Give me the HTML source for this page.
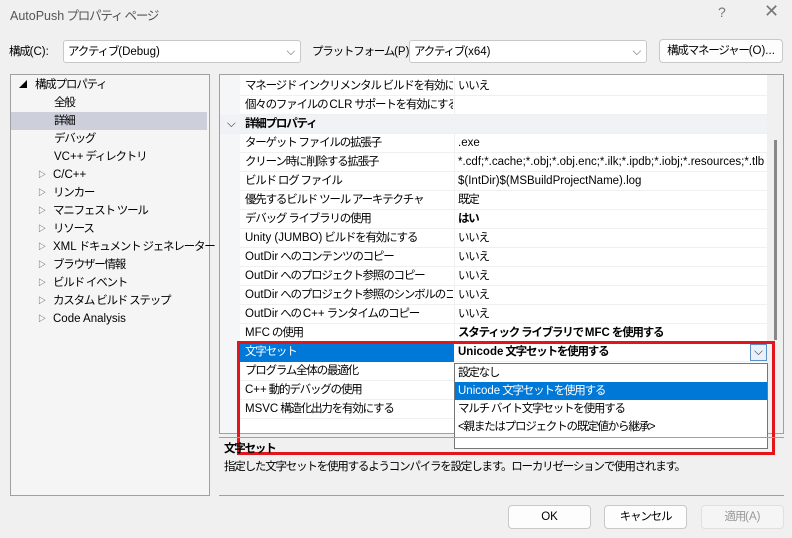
<!DOCTYPE html>
<html><head><meta charset="utf-8"><style>
*{box-sizing:border-box;margin:0;padding:0}
body{width:792px;height:538px;background:#f0f0f0;font-family:"Liberation Sans","Noto Sans CJK JP",sans-serif;font-size:11.5px;letter-spacing:-1.2px;color:#000;position:relative;overflow:hidden}
.l{letter-spacing:0}
.a{position:absolute;white-space:nowrap}
.box{position:absolute;background:#fff;border:1px solid #a0a0a0}
.btn{position:absolute;border:1px solid #c8c8c8;border-radius:4px;background:#fdfdfd;text-align:center;line-height:22px;white-space:nowrap;overflow:hidden}
.row{position:absolute;left:240px;width:527px;height:19px;border-bottom:1px solid #f0f0f0;line-height:18px;white-space:nowrap}
.row .n{position:absolute;left:5px;width:208px;overflow:hidden}
.row .v{position:absolute;left:218px}
.row .sep{position:absolute;left:214px;top:0;width:1px;height:19px;background:#f0f0f0}
.t{position:absolute;line-height:18px;white-space:nowrap}
.tree div{height:18px;line-height:18px;overflow:visible}
.tr{font-size:8px;color:#333;display:inline-block;width:15px;line-height:10px;vertical-align:1px}
</style></head><body>
<div class="a" style="left:10px;top:5px;color:#555;font-size:12.5px"><span class="l">AutoPush</span> プロパティ ページ</div>
<div class="a" style="left:718px;top:4px;color:#777;font-size:14px">?</div>
<div class="a" style="left:764px;top:1px;color:#777;font-size:18px">✕</div>

<div class="a" style="left:9px;top:43px">構成<span class="l">(C):</span></div>
<div class="btn" style="left:63px;top:40px;width:238px;height:23px;border-radius:3px;text-align:left;padding-left:4px;background:#fff">アクティブ<span class="l">(Debug)</span><span style="position:absolute;right:6px;top:0;color:#666">⌵</span></div>
<div class="a" style="left:312px;top:43px">プラットフォーム<span class="l">(P):</span></div>
<div class="btn" style="left:409px;top:40px;width:238px;height:23px;border-radius:3px;text-align:left;padding-left:4px;background:#fff">アクティブ<span class="l">(x64)</span><span style="position:absolute;right:6px;top:0;color:#666">⌵</span></div>
<div class="btn" style="left:659px;top:39px;width:124px;height:24px">構成マネージャー<span class="l">(O)...</span></div>

<div class="box" style="left:10px;top:74px;width:200px;height:422px;background:#f5f5f5"></div>
<div class="a" style="left:11px;top:112px;width:196px;height:18px;background:#cdd0db"></div>
<div class="t" style="left:19px;top:76px;font-size:8px">◢</div>
<div class="t" style="left:35px;top:76px">構成プロパティ</div>
<div class="t" style="left:54px;top:94px">全般</div>
<div class="t" style="left:54px;top:112px">詳細</div>
<div class="t" style="left:54px;top:130px">デバッグ</div>
<div class="t" style="left:54px;top:148px"><span class="l">VC++</span> ディレクトリ</div>
<div class="tree" style="position:absolute;left:38px;top:166px;white-space:nowrap">
<div><span class="tr">▷</span><span class="l">C/C++</span></div><div><span class="tr">▷</span>リンカー</div><div><span class="tr">▷</span>マニフェスト ツール</div><div><span class="tr">▷</span>リソース</div><div><span class="tr">▷</span><span class="l">XML</span> ドキュメント ジェネレーター</div><div><span class="tr">▷</span>ブラウザー情報</div><div><span class="tr">▷</span>ビルド イベント</div><div><span class="tr">▷</span>カスタム ビルド ステップ</div><div><span class="tr">▷</span><span class="l">Code Analysis</span></div></div>

<div class="box" style="left:219px;top:74px;width:565px;height:360px"></div>
<div class="a" style="left:220px;top:75px;width:20px;height:358px;background:#f5f6f8"></div>
<div class="a" style="left:767px;top:75px;width:16px;height:358px;background:#f0f0f0"></div>
<div class="a" style="left:774px;top:140px;width:3px;height:200px;background:#888"></div>
<div class="row" style="top:77px"><span class="n">マネージド インクリメンタル ビルドを有効にする</span><span class="sep"></span><span class="v">いいえ</span></div>
<div class="row" style="top:96px"><span class="n">個々のファイルの <span class="l">CLR</span> サポートを有効にする</span><span class="sep"></span></div>
<div class="row" style="top:115px;left:220px;width:547px;background:#f0f2f6"><span class="n" style="left:7px;color:#333">⌵</span><span class="n" style="left:25px;font-weight:bold">詳細プロパティ</span></div>
<div class="row" style="top:134px"><span class="n">ターゲット ファイルの拡張子</span><span class="sep"></span><span class="v l">.exe</span></div>
<div class="row" style="top:153px;overflow:hidden"><span class="n">クリーン時に削除する拡張子</span><span class="sep"></span><span class="v l">*.cdf;*.cache;*.obj;*.obj.enc;*.ilk;*.ipdb;*.iobj;*.resources;*.tlb</span></div>
<div class="row" style="top:172px"><span class="n">ビルド ログ ファイル</span><span class="sep"></span><span class="v l">$(IntDir)$(MSBuildProjectName).log</span></div>
<div class="row" style="top:191px"><span class="n">優先するビルド ツール アーキテクチャ</span><span class="sep"></span><span class="v">既定</span></div>
<div class="row" style="top:210px"><span class="n">デバッグ ライブラリの使用</span><span class="sep"></span><span class="v" style="font-weight:bold">はい</span></div>
<div class="row" style="top:229px"><span class="n"><span class="l">Unity (JUMBO)</span> ビルドを有効にする</span><span class="sep"></span><span class="v">いいえ</span></div>
<div class="row" style="top:248px"><span class="n"><span class="l">OutDir</span> へのコンテンツのコピー</span><span class="sep"></span><span class="v">いいえ</span></div>
<div class="row" style="top:267px"><span class="n"><span class="l">OutDir</span> へのプロジェクト参照のコピー</span><span class="sep"></span><span class="v">いいえ</span></div>
<div class="row" style="top:286px"><span class="n"><span class="l">OutDir</span> へのプロジェクト参照のシンボルのコピー</span><span class="sep"></span><span class="v">いいえ</span></div>
<div class="row" style="top:305px"><span class="n"><span class="l">OutDir</span> への <span class="l">C++</span> ランタイムのコピー</span><span class="sep"></span><span class="v">いいえ</span></div>
<div class="row" style="top:324px"><span class="n"><span class="l">MFC</span> の使用</span><span class="sep"></span><span class="v" style="font-weight:bold">スタティック ライブラリで <span class="l">MFC</span> を使用する</span></div>
<div class="row" style="top:343px"><span class="n" style="left:0;width:214px;height:19px;padding-left:5px;background:#0078d7;color:#fff">文字セット</span><span class="v" style="left:218px;font-weight:bold"><span class="l">Unicode</span> 文字セットを使用する</span>
<span style="position:absolute;left:510px;top:1px;width:17px;height:17px;border:1px solid #5a8fc8;background:#e8f1fb;text-align:center;line-height:14px;color:#333;letter-spacing:0">⌵</span></div>
<div class="row" style="top:362px"><span class="n">プログラム全体の最適化</span></div>
<div class="row" style="top:381px"><span class="n"><span class="l">C++</span> 動的デバッグの使用</span></div>
<div class="row" style="top:400px"><span class="n"><span class="l">MSVC</span> 構造化出力を有効にする</span></div>

<div class="a" style="left:454px;top:363px;width:314px;height:86px;background:#fff;border:1px solid #767676;line-height:18px">
<div style="padding-left:3px">設定なし</div>
<div style="padding-left:3px;background:#0078d7;color:#fff"><span class="l">Unicode</span> 文字セットを使用する</div>
<div style="padding-left:3px">マルチ バイト文字セットを使用する</div>
<div style="padding-left:3px">&lt;親またはプロジェクトの既定値から継承&gt;</div></div>

<div class="a" style="left:237px;top:341px;width:538px;height:114px;border:3px solid #e3151a"></div>

<div class="a" style="left:219px;top:437px;width:565px;height:59px;border-top:1px solid #a0a0a0;border-bottom:1px solid #a0a0a0"></div>
<div class="a" style="left:224px;top:440px;font-weight:bold">文字セット</div>
<div class="a" style="left:224px;top:458px">指定した文字セットを使用するようコンパイラを設定します。ローカリゼーションで使用されます。</div>

<div class="btn" style="left:508px;top:505px;width:83px;height:24px"><span class="l">OK</span></div>
<div class="btn" style="left:604px;top:505px;width:83px;height:24px">キャンセル</div>
<div class="btn" style="left:701px;top:505px;width:83px;height:24px;color:#999;background:#f5f5f5;border-color:#e0e0e0">適用<span class="l">(A)</span></div>
</body></html>
